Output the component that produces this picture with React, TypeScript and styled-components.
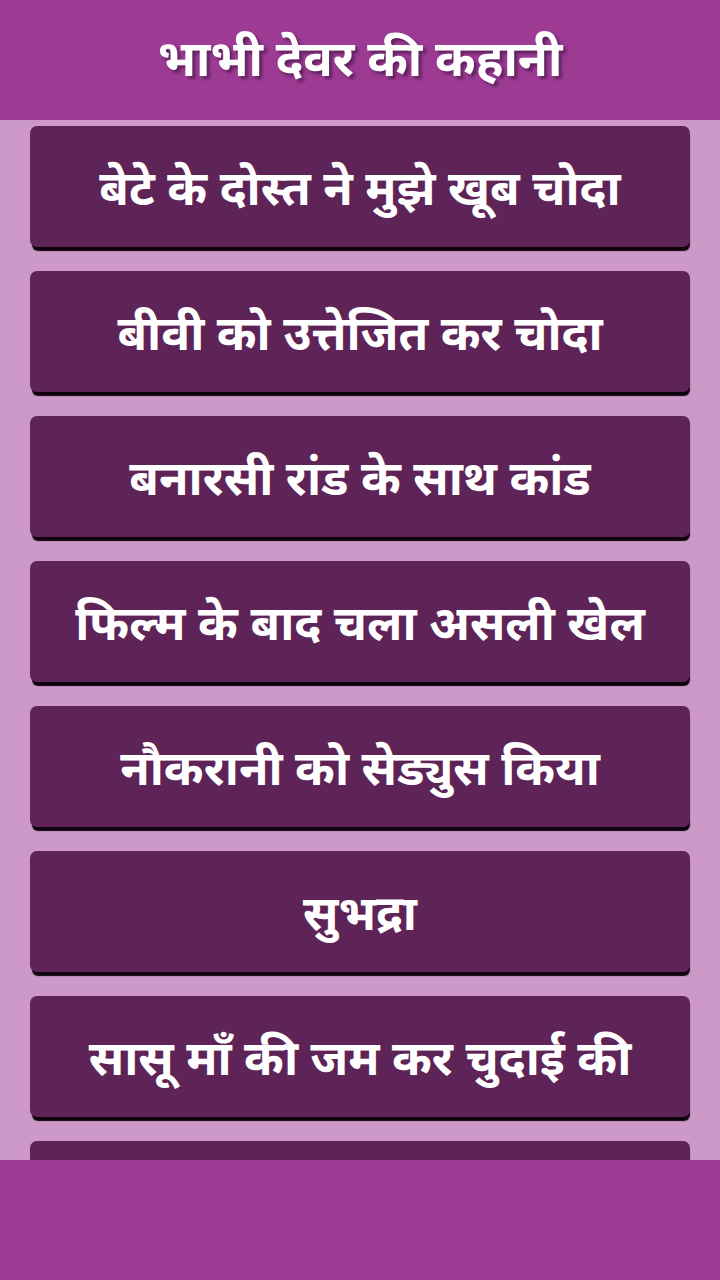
import React from "react";
import styled, { createGlobalStyle } from "styled-components";

const GlobalStyle = createGlobalStyle`
  html, body {
    margin: 0;
    padding: 0;
    height: 100%;
    background: #cc99c9;
    font-family: "Noto Sans", "Noto Sans Devanagari", "DejaVu Sans", sans-serif;
  }
  #root { height: 100%; }
`;

const Screen = styled.div`
  width: 720px;
  height: 1280px;
  display: flex;
  flex-direction: column;
  background: #cc99c9;
  overflow: hidden;
`;

const Header = styled.header`
  height: 120px;
  flex: none;
  background: #9c3a94;
  display: flex;
  align-items: center;
  justify-content: center;
  padding-bottom: 6px;
  box-sizing: border-box;
`;

const Title = styled.h1`
  margin: 0;
  color: #ffffff;
  font-size: 49px;
  font-weight: 700;
  line-height: 1.2;
  text-shadow: 3px 3px 3px rgba(60, 20, 60, 0.6);
`;

const List = styled.main`
  flex: 1;
  min-height: 0;
  overflow: hidden;
  padding: 6px 30px 0 30px;
  display: flex;
  flex-direction: column;
  gap: 24px;
`;

const Card = styled.button`
  flex: none;
  height: 121px;
  width: 100%;
  border: none;
  border-radius: 7px;
  background: #5e2357;
  box-shadow: 1px 5px 1px -1px #0e030c;
  color: #ffffff;
  font-family: inherit;
  font-size: 48px;
  font-weight: 700;
  line-height: 1.2;
  display: flex;
  align-items: center;
  justify-content: center;
  padding: 0 8px;
  white-space: nowrap;
  cursor: pointer;
`;

const Footer = styled.footer`
  height: 120px;
  flex: none;
  background: #9c3a94;
`;

const stories = [
  "बेटे के दोस्त ने मुझे खूब चोदा",
  "बीवी को उत्तेजित कर चोदा",
  "बनारसी रांड के साथ कांड",
  "फिल्म के बाद चला असली खेल",
  "नौकरानी को सेड्युस किया",
  "सुभद्रा",
  "सासू माँ की जम कर चुदाई की",
  "",
];

export default function App() {
  return (
    <>
      <GlobalStyle />
      <Screen>
        <Header>
          <Title>भाभी देवर की कहानी</Title>
        </Header>
        <List>
          {stories.map((s, i) => (
            <Card key={i}>{s}</Card>
          ))}
        </List>
        <Footer />
      </Screen>
    </>
  );
}
